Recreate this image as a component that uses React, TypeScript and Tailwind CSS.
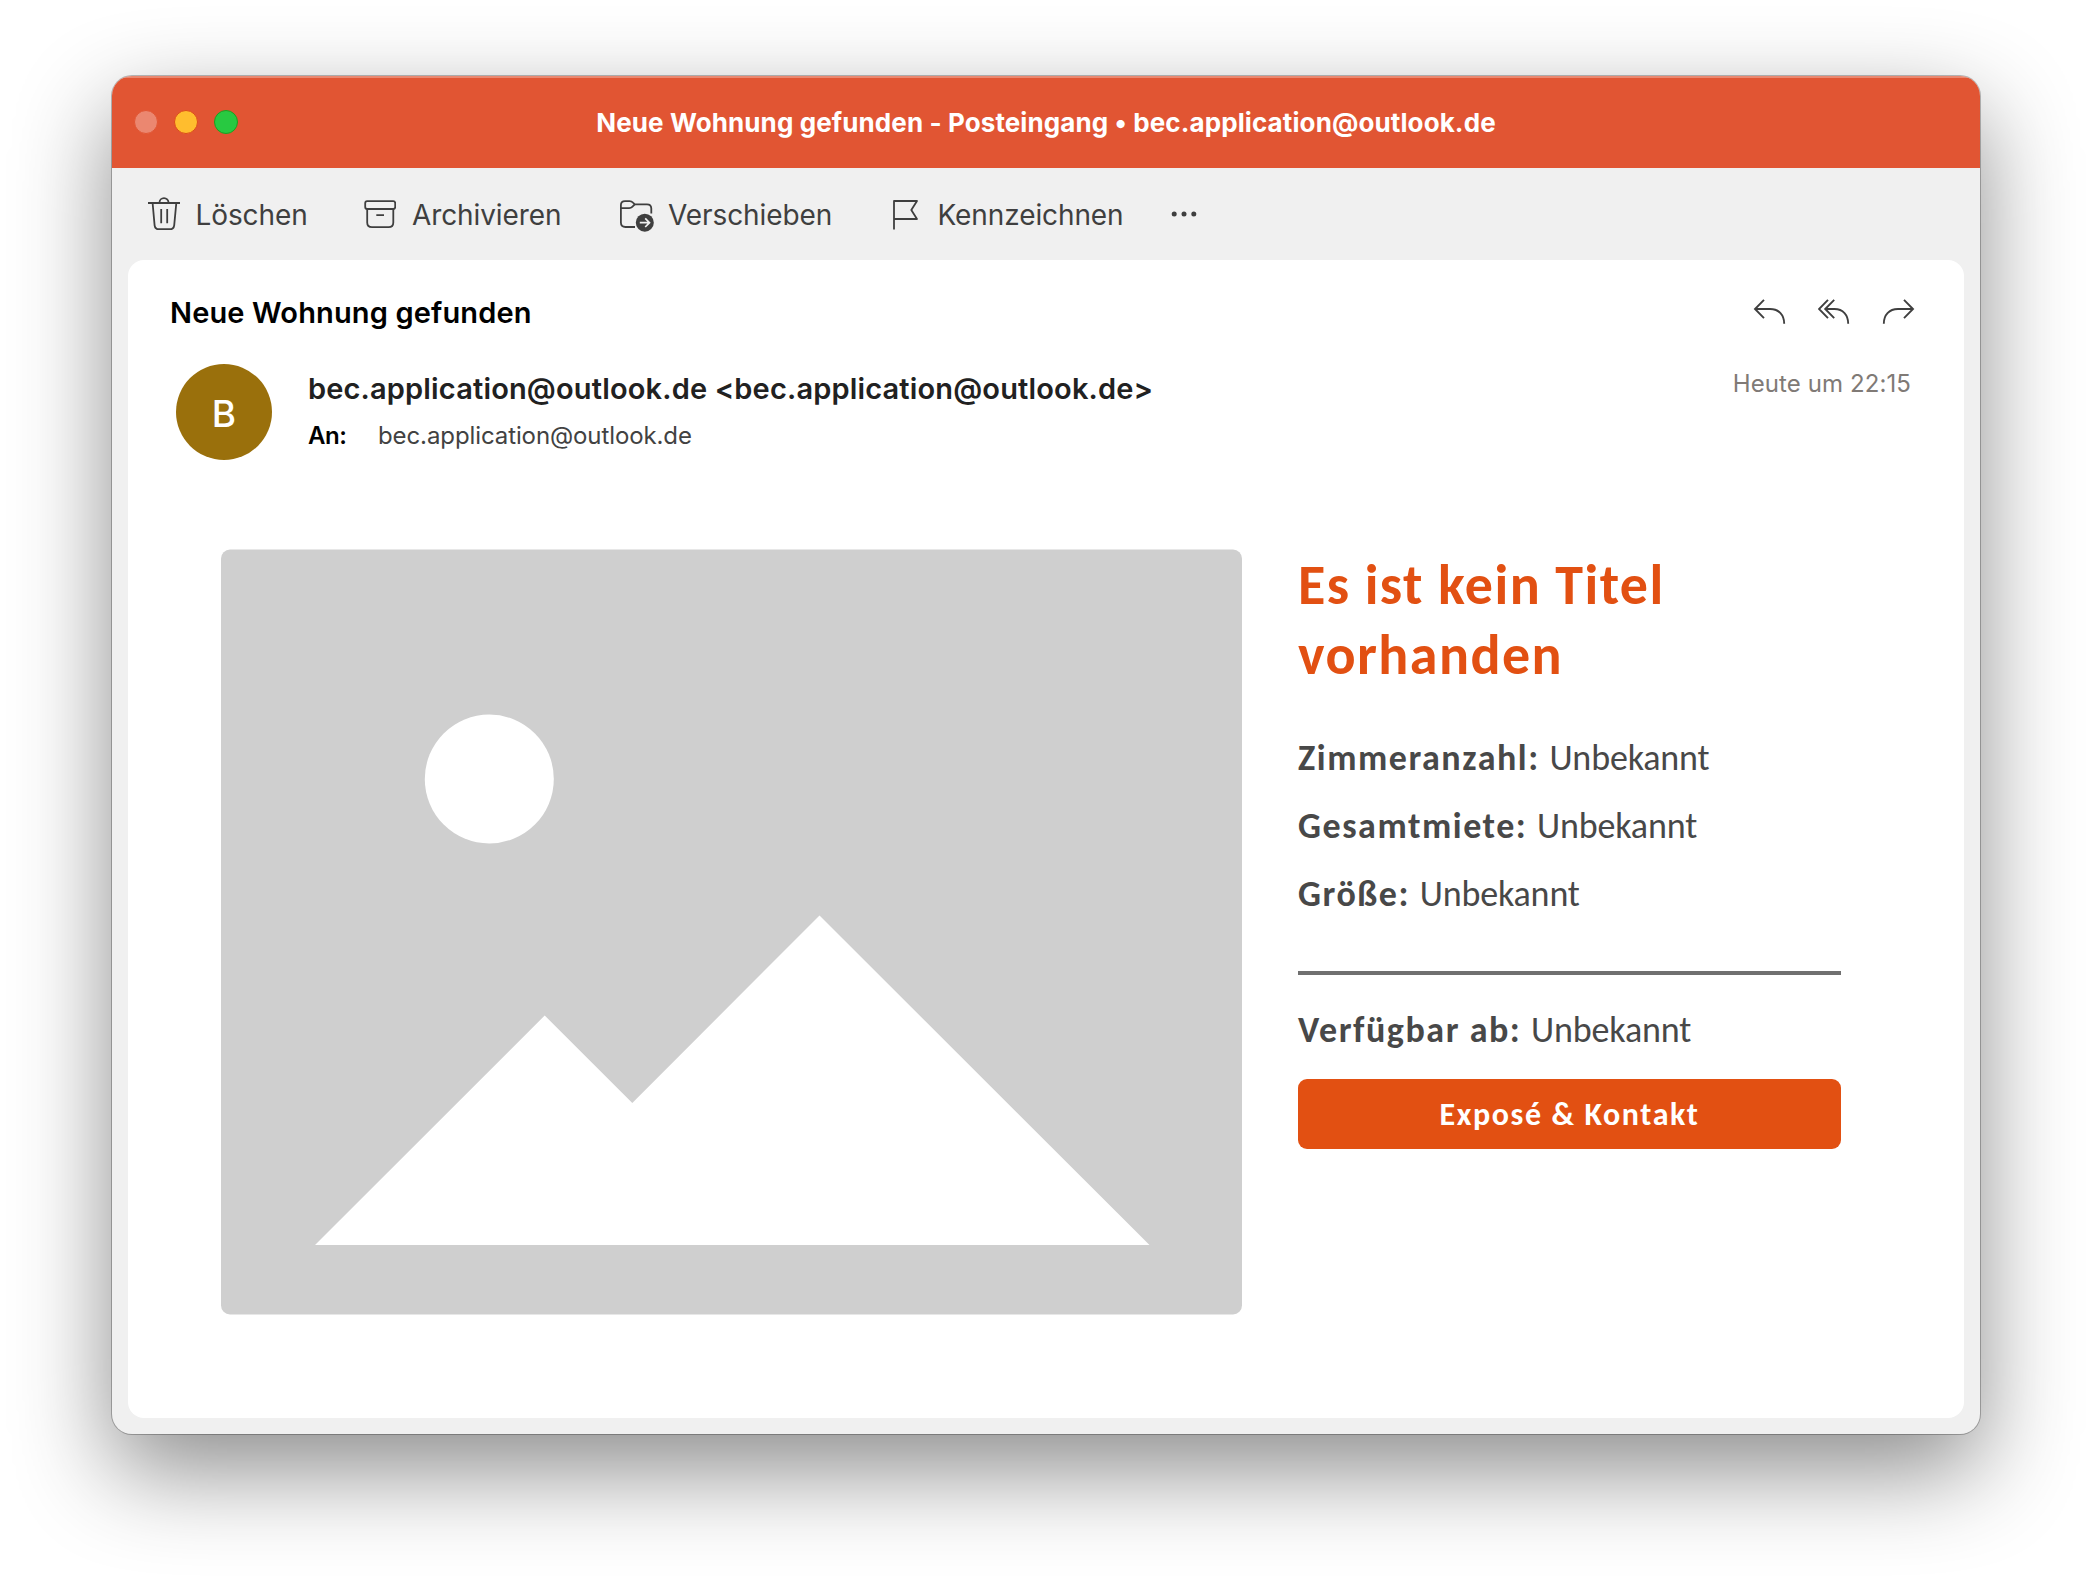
import type { ReactNode } from 'react'

function TrashIcon() {
  return (
    <svg width="32" height="36" viewBox="148 196 32 36" fill="none" stroke="#3f3f3f" strokeWidth="1.8">
      <path d="M148 203H180M159.5 202.5a4.5 4.3 0 0 1 9 0M152.6 203L154.6 225.3Q155.1 229.2 159 229.2H169.8Q173.7 229.2 174.2 225.3L176.3 203M161.2 209V223.2M167.2 209V223.2" />
    </svg>
  )
}

function ArchiveIcon() {
  return (
    <svg width="32" height="36" viewBox="364 196 32 36" fill="none" stroke="#3f3f3f" strokeWidth="1.8">
      <rect x="365.2" y="201.2" width="30" height="7.8" rx="2" />
      <path d="M367.2 209V222.5Q367.2 227.2 372 227.2H388.6Q393.3 227.2 393.3 222.5V209M376.3 215.1H384" />
    </svg>
  )
}

function MoveIcon() {
  return (
    <svg width="36" height="36" viewBox="619 196 36 36" fill="none" stroke="#3f3f3f" strokeWidth="1.8">
      <path d="M635 227H625.5Q620.9 227 620.9 222.5V205Q620.9 201.1 625 201.1H629.5Q631.5 201.1 633 202.6L634.8 204.3H647Q651.3 204.3 651.3 208.6V213.5" />
      <path d="M620.9 208.1H629.2Q631 208.1 632.2 206.9L634.8 204.3" />
      <circle cx="644.8" cy="222.7" r="9" fill="#3f3f3f" stroke="none" />
      <path d="M639.8 222.7H649.2M645.2 218.4L649.5 222.7L645.2 227" stroke="#f0f0f0" strokeWidth="1.7" />
    </svg>
  )
}

function FlagIcon() {
  return (
    <svg width="28" height="36" viewBox="892 196 28 36" fill="none" stroke="#3f3f3f" strokeWidth="1.8" strokeLinejoin="round">
      <path d="M894 229.5V201H917L911.3 210L917 219H894" />
    </svg>
  )
}

function MoreIcon() {
  return (
    <svg width="28" height="36" viewBox="1170 196 28 36" fill="#3f3f3f">
      <circle cx="1174.2" cy="214" r="2.5" />
      <circle cx="1184" cy="214" r="2.5" />
      <circle cx="1193.8" cy="214" r="2.5" />
    </svg>
  )
}

function ReplyIcon() {
  return (
    <svg width="34" height="28" viewBox="1753 298 34 28" fill="none" stroke="#3f3f3f" strokeWidth="1.9">
      <path d="M1764 299.9L1755 309L1764 318.1M1755 309H1770C1779 309 1784.2 315 1784.2 323.7" />
    </svg>
  )
}

function ReplyAllIcon() {
  return (
    <svg width="34" height="28" viewBox="1818 298 34 28" fill="none" stroke="#3f3f3f" strokeWidth="1.9">
      <path d="M1828 299.9L1819 309L1828 318.1M1834.2 299.9L1825.2 309L1834.2 318.1M1825.2 309H1834.5C1843 309 1848.2 315 1848.2 323.7" />
    </svg>
  )
}

function ForwardIcon() {
  return (
    <svg width="34" height="28" viewBox="1882 298 34 28" fill="none" stroke="#3f3f3f" strokeWidth="1.9">
      <path d="M1904 299.9L1913 309L1904 318.1M1913 309H1898C1889 309 1883.8 315 1883.8 323.7" />
    </svg>
  )
}

function Tool({ children }: { children: ReactNode }) {
  return <span className="pt-[2px]">{children}</span>
}

function Detail({ label, children }: { label: string; children: ReactNode }) {
  return (
    <p className="flex h-[68px] items-center text-[36px] leading-[44px] tracking-[-0.15px] whitespace-pre text-[#484848]">
      <strong className="font-bold tracking-[1.55px]">{label} </strong>
      <span>{children}</span>
    </p>
  )
}

export default function App() {
  return (
    <div className="h-[1582px] w-[2092px] overflow-hidden bg-white px-[112px] pt-[76px] font-['Inter',sans-serif]">
      <main className="flex h-[1358px] flex-col overflow-hidden rounded-[20px] bg-[#f0f0f0] shadow-[0_0_0_1px_rgba(0,0,0,0.25),0_36px_96px_rgba(0,0,0,0.46)]">
        <header className="grid h-[92px] shrink-0 grid-cols-[300px_1fr_300px] items-center bg-[#e15533] shadow-[inset_0_2px_0_rgba(255,255,255,0.3)]">
          <div className="flex items-center gap-4 pl-[22px]">
            <span className="size-6 rounded-full border border-[#e15533] bg-[#eb8770]" />
            <span className="size-6 rounded-full border border-[#dc4a1c] bg-[#ffbd2e]" />
            <span className="size-6 rounded-full border border-[#1d9f1f] bg-[#28c941]" />
          </div>
          <h1 className="pt-[2px] text-center text-[26px] leading-8 font-bold tracking-[0.1px] whitespace-nowrap text-white">Neue Wohnung gefunden - Posteingang • bec.application@outlook.de</h1>
        </header>

        <nav className="flex h-[92px] shrink-0 items-center pl-9 text-[28px] leading-9 tracking-[-0.1px] text-[#3f3f3f]">
          <div className="flex w-[216px] items-center gap-[15.5px]"><TrashIcon /><Tool>Löschen</Tool></div>
          <div className="flex w-[255px] items-center gap-4"><ArchiveIcon /><Tool>Archivieren</Tool></div>
          <div className="flex w-[273px] items-center gap-[13px]"><MoveIcon /><Tool>Verschieben</Tool></div>
          <div className="flex w-[278px] items-center gap-[17.5px]"><FlagIcon /><Tool>Kennzeichnen</Tool></div>
          <MoreIcon />
        </nav>

        <article className="mx-4 mb-4 flex-1 rounded-2xl bg-white">
          <div className="flex h-[104px] items-center justify-between pr-12 pl-[42px]">
            <h2 className="pt-[2px] text-[29px] leading-9 font-semibold tracking-[0.14px] text-black">Neue Wohnung gefunden</h2>
            <div className="flex gap-[30.5px]"><ReplyIcon /><ReplyAllIcon /><ForwardIcon /></div>
          </div>

          <div className="flex pr-[53px] pl-12">
            <div className="flex size-24 items-center justify-center rounded-full bg-[#9a700c] pt-[3px] text-[37px] leading-none font-medium text-white">B</div>
            <div className="flex-1 pt-[7px] pl-9">
              <div className="text-[29px] leading-9 font-semibold tracking-[0.16px] text-[#212121]">{'bec.application@outlook.de <bec.application@outlook.de>'}</div>
              <div className="mt-[13px] flex text-2xl leading-8">
                <span className="w-[70px] font-semibold tracking-[-0.4px] text-black">An:</span>
                <span className="tracking-[-0.1px] text-[#424242]">bec.application@outlook.de</span>
              </div>
            </div>
            <time className="pt-1 text-2xl leading-8 tracking-[0.1px] text-[#807a76]">Heute um 22:15</time>
          </div>

          <section className="mt-[88px] flex gap-14 pl-[93px] font-[Calibri,Carlito,Lato,sans-serif]">
            <svg className="mt-px" width="1021" height="766" viewBox="0 0 1021 766">
              <rect y="0.5" width="1021" height="765" rx="9" fill="#cfcfcf" />
              <circle cx="268.3" cy="230" r="64.5" fill="#fff" />
              <path d="M94 696L323.7 466.5L411.3 554L598.5 366.5L928.5 696Z" fill="#fff" />
            </svg>
            <div className="w-[543px]">
              <h3 className="pt-[2px] text-[56px] leading-[70px] font-bold tracking-[1.45px] text-[#e25012]">Es ist kein Titel<br />vorhanden</h3>
              <div className="pt-[34px]">
                <Detail label="Zimmeranzahl:">Unbekannt</Detail>
                <Detail label="Gesamtmiete:">Unbekannt</Detail>
                <Detail label="Größe:">Unbekannt</Detail>
              </div>
              <hr className="mt-[43px] border-0 border-t-4 border-[#707070]" />
              <div className="mt-[21px]"><Detail label="Verfügbar ab:">Unbekannt</Detail></div>
              <button className="mt-[15px] flex h-[70px] w-full items-center justify-center rounded-[9px] bg-[#e25012] pt-px text-[32px] leading-10 font-bold tracking-[1.6px] text-white">Exposé &amp; Kontakt</button>
            </div>
          </section>
        </article>
      </main>
    </div>
  )
}
